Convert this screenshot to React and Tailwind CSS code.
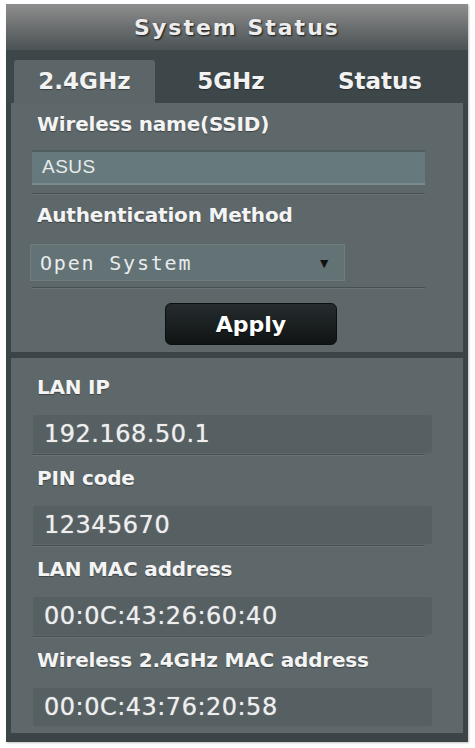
import React from 'react';

const label = "font-['DejaVu_Sans',sans-serif] font-bold text-[20px] leading-[28px] h-[28px] tracking-[-0.2px] text-[#f4f4f4] [text-shadow:0_1px_1px_rgba(0,0,0,0.35)]";
const value = "font-['DejaVu_Sans',sans-serif] text-[24px] tracking-[0.5px] text-[#eeeeee] [text-shadow:0_0_1px_rgba(255,255,255,0.6)]";

const statusRows = [
  { name: 'LAN IP', value: '192.168.50.1' },
  { name: 'PIN code', value: '12345670' },
  { name: 'LAN MAC address', value: '00:0C:43:26:60:40' },
  { name: 'Wireless 2.4GHz MAC address', value: '00:0C:43:76:20:58' },
];

const Divider = ({ className = '' }) => (
  <div className={`w-[393px] ${className}`}>
    <div className="h-px bg-[#465052]" />
    <div className="h-px bg-[#6b7475]" />
  </div>
);

const Tab = ({ children, active, className = '' }) => (
  <div
    className={`h-[43px] flex items-center justify-center font-['DejaVu_Sans',sans-serif] font-bold text-[23px] text-[#f2f2f2] [text-shadow:0_1px_1px_rgba(0,0,0,0.4)] ${
      active ? 'bg-[#5c6668] rounded-t-[3px]' : ''
    } ${className}`}
  >
    {children}
  </div>
);

export default function App() {
  return (
    <div className="bg-white min-h-screen pt-[4px] pl-[6px] pr-[7px] pb-[6px]">
      <div className="w-[462px] bg-[#3b4446] shadow-[1px_1px_2px_rgba(0,0,0,0.25)]">
        {/* title bar */}
        <div className="h-[46px] bg-gradient-to-b from-[#8e8e8e] via-[#6c6f70] to-[#4b5355] flex items-center justify-center">
          <span className="font-['DejaVu_Sans',sans-serif] font-bold text-[22px] tracking-[2px] text-[#ededed] [text-shadow:1px_1px_2px_rgba(0,0,0,0.8)]">
            System Status
          </span>
        </div>

        {/* band tabs */}
        <div className="bg-[#3d4749] pt-[10px] px-[8px] flex">
          <Tab active className="w-[141px]">2.4GHz</Tab>
          <Tab className="w-[152px]">5GHz</Tab>
          <Tab className="w-[146px]">Status</Tab>
        </div>

        {/* wireless settings */}
        <div className="mx-[5px] bg-[#5e6769] pt-[7px] pl-[21px] h-[249px]">
          <div className={`${label} pl-[5px]`}>Wireless name(SSID)</div>
          <div className="mt-[12px] w-[393px] h-[35px] bg-[#667a7e] border-t-2 border-[#4f5d60] border-b-2 border-b-[#7a8b8e] flex items-center pl-[10px]">
            <span className="font-['Liberation_Sans',sans-serif] text-[19px] tracking-[0.5px] text-[#e6eaea]">ASUS</span>
          </div>
          <Divider className="mt-[8px]" />

          <div className={`${label} pl-[5px] mt-[6px]`}>Authentication Method</div>
          <div className="mt-[15px] -ml-[2px] w-[315px] h-[37px] bg-[#627275] border border-[#6e7d80] flex items-center justify-between pl-[9px] pr-[13px]">
            <span className="font-['DejaVu_Sans_Mono',monospace] text-[20px] tracking-[1.8px] text-[#e8ecec]">Open System</span>
            <span className="text-[14px] text-[#111]">▼</span>
          </div>
          <Divider className="mt-[6px]" />

          <button className="mt-[14px] ml-[133px] w-[172px] h-[42px] rounded-[6px] bg-gradient-to-b from-[#262c2e] to-[#101415] border border-[#0c0f10] flex items-center justify-center">
            <span className="font-['DejaVu_Sans',sans-serif] font-bold text-[22px] text-white [text-shadow:0_1px_1px_rgba(0,0,0,0.6)]">Apply</span>
          </button>
        </div>

        {/* device info */}
        <div className="mx-[5px] mt-[6px] bg-[#5e6769] pt-[15px] pl-[21px] h-[375px]">
          {statusRows.map((row, i) => (
            <div key={row.name} className={i > 0 ? 'mt-[8px]' : ''}>
              <div className={`${label} pl-[5px]`}>{row.name}</div>
              <div className="mt-[14px] ml-[1px] w-[399px] h-[38px] bg-[#566062] rounded-[2px] flex items-center pl-[11px]">
                <span className={value}>{row.value}</span>
              </div>
              {i < statusRows.length - 1 && <Divider className="mt-[1px]" />}
            </div>
          ))}
        </div>
        <div className="h-[9px]" />
      </div>
    </div>
  );
}
